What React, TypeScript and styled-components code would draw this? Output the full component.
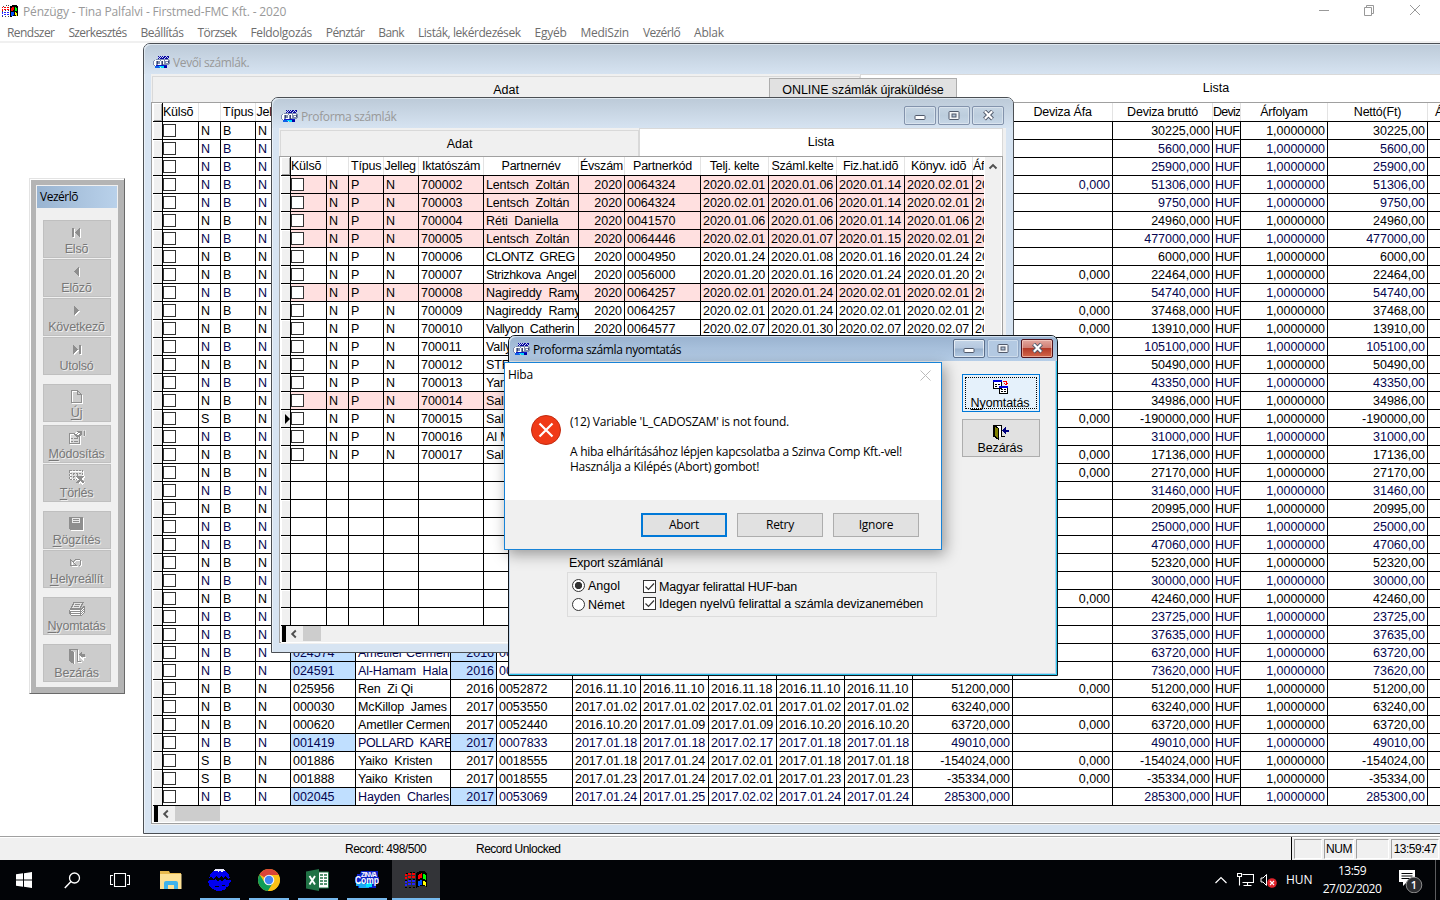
import React from "react";
import styled, { createGlobalStyle, css } from "styled-components";

const arial = `"Liberation Sans", Arial, sans-serif`;
const segoe = `"Open Sans", "Segoe UI", sans-serif`;

const Global = createGlobalStyle`
  * { box-sizing: border-box; }
  body { margin: 0; background: #fff; overflow: hidden; }
`;

const Screen = styled.div`
  width: 1440px;
  height: 900px;
  display: flex;
  flex-direction: column;
  overflow: hidden;
  background: #fff;
  font-family: ${arial};
  font-size: 12.5px;
  color: #000;
`;

/* ---------- application frame ---------- */

const AppTitle = styled.header`
  height: 23px;
  display: flex;
  align-items: center;
  padding-left: 2px;
  font: 12px ${segoe};
  letter-spacing: -0.15px;
  color: #999;
`;
const AppName = styled.span`
  margin-left: 5px;
  flex: 1;
`;
const AppControls = styled.div`
  width: 122px;
  display: flex;
  justify-content: space-between;
  padding: 0 19px 3px 0;
`;
const MenuBar = styled.nav`
  height: 20px;
  display: flex;
  align-items: center;
  gap: 13.95px;
  padding-left: 7px;
  font: 12px ${segoe};
  color: #6d6d6d;
  white-space: pre;
  border-bottom: 2px solid #f0f0f0;
`;
const MenuItem = styled.span<{ $ls: number }>`
  letter-spacing: ${(p) => p.$ls}px;
`;
const Workspace = styled.main`
  position: relative;
  height: 793px;
  overflow: hidden;
`;

/* ---------- MDI windows ---------- */

const Frame = styled.section<{ $x: number; $y: number; $w: number; $h: number }>`
  position: absolute;
  left: ${(p) => p.$x}px;
  top: ${(p) => p.$y}px;
  width: ${(p) => p.$w}px;
  height: ${(p) => p.$h}px;
  display: flex;
  flex-direction: column;
  border: 1px solid #4b4f54;
  border-radius: 7px 7px 0 0;
  background: #d7e4f2;
  box-shadow: inset 1px 1px 0 #eaf1f8;
  padding: 0 7px 8px;
`;
const Caption = styled.div`
  height: 30px;
  flex: none;
  display: flex;
  align-items: center;
  margin: 0 -7px;
  padding: 7px 9px 0 9px;
  border-radius: 6px 6px 0 0;
  background: linear-gradient(#bccad8, #d6e3f1);
  font: 12px ${segoe};
  letter-spacing: -0.38px;
  color: #999;
  box-shadow: inset 1px 1px 0 #dfe8f0;
`;
const CaptionText = styled.span`
  flex: 1;
  margin-left: 3px;
`;
const CaptionButtons = styled.div`
  display: flex;
  gap: 2px;
  padding-bottom: 2px;
`;
const CaptionButton = styled.span<{ $kind?: "active" | "dim" | "close" }>`
  width: 32px;
  height: 19px;
  display: flex;
  align-items: center;
  justify-content: center;
  border: 1px solid #8393ac;
  border-radius: 2px;
  box-shadow: inset 0 0 0 1px rgba(255, 255, 255, 0.35);
  background: linear-gradient(#c6d5e3, #bccddd 50%, #c6d6e6);
  ${(p) =>
    p.$kind === "active" &&
    css`
      border-color: #5a6d89;
      background: linear-gradient(#c3d4e7 0%, #b4c7de 48%, #98b0cc 52%, #b3cae3);
      box-shadow: inset 0 0 0 1px rgba(255, 255, 255, 0.6);
    `}
  ${(p) =>
    p.$kind === "dim" &&
    css`
      border-color: #8fa5c3;
      background: #b3c9e2;
    `}
  ${(p) =>
    p.$kind === "close" &&
    css`
      border-color: #50121b;
      background: linear-gradient(#e3a79e 0%, #d07f74 45%, #b43a28 50%, #d2674b);
      box-shadow: inset 0 0 0 1px rgba(255, 220, 210, 0.55);
    `}
`;
const Content = styled.div<{ $pr?: number }>`
  flex: 1;
  min-height: 0;
  display: flex;
  flex-direction: column;
  background: #f0f0f0;
  padding-right: ${(p) => p.$pr ?? 0}px;
`;
const Tabs = styled.div`
  height: 28px;
  flex: none;
  display: flex;
`;
const Tab = styled.div<{ $w: number; $on?: boolean }>`
  width: ${(p) => p.$w}px;
  flex: none;
  display: flex;
  align-items: center;
  justify-content: center;
  background: ${(p) => (p.$on ? "#fff" : "#f0f0f0")};
  margin: ${(p) => (p.$on ? "0" : "2px 0 0 1px")};
  padding-bottom: ${(p) => (p.$on ? 1 : 0)}px;
  border: 1px solid #d9d9d9;
  border-bottom: 0;
`;
const OnlineButton = styled.div`
  position: absolute;
  left: 625px;
  top: 34px;
  width: 188px;
  height: 24px;
  display: flex;
  align-items: center;
  justify-content: center;
  background: #e1e1e1;
  border: 1px solid #adadad;
  letter-spacing: -0.07px;
`;
const Sheet = styled.div`
  position: relative;
  flex: 1;
  min-height: 0;
  display: flex;
  flex-direction: column;
  border: 1px solid #a0a0a0;
  background: #fff;
  margin-bottom: 1px;
  padding-left: 1px;
`;

/* ---------- data grid ---------- */

const GridBox = styled.div`
  overflow: hidden;
  flex: none;
`;
const GridRow = styled.div<{ $cols: string; $head?: boolean; $navy?: boolean; $bg?: string }>`
  display: grid;
  grid-template-columns: ${(p) => p.$cols};
  width: max-content;
  height: ${(p) => (p.$head ? 19 : 18)}px;
  border-bottom: 1px solid #000;
  color: ${(p) => (p.$navy ? "#04044f" : "#000")};
  background: ${(p) => p.$bg ?? "#fff"};
`;
const Cell = styled.div<{ $align?: string; $bg?: string; $ls?: number }>`
  display: flex;
  align-items: center;
  justify-content: ${(p) => p.$align ?? "flex-start"};
  padding: 1px 2px 0;
  overflow: hidden;
  white-space: pre;
  letter-spacing: ${(p) => p.$ls ?? -0.03}px;
  border-right: 1px solid #000;
  background: ${(p) => p.$bg ?? "transparent"};
`;
const HeadCell = styled.div<{ $left?: number; $ls?: number }>`
  display: flex;
  align-items: center;
  justify-content: ${(p) => (p.$left === undefined ? "center" : "flex-start")};
  padding: 0 0 1px ${(p) => p.$left ?? 0}px;
  overflow: hidden;
  white-space: pre;
  letter-spacing: ${(p) => p.$ls ?? -0.22}px;
  border-right: 1px solid #e3e3e3;
`;
const Handle = styled.div<{ $head?: boolean }>`
  background: #f0f0f0;
  border-right: 1px solid #000;
  display: flex;
  align-items: center;
  justify-content: flex-end;
  box-shadow: inset 1px 1px 0 #fff ${(p) => (p.$head ? ", inset -1px -1px 0 #a0a0a0" : "")};
`;
const Box = styled.span`
  width: 13px;
  height: 13px;
  margin: 0 0 1px -2px;
  border: 1px solid #333;
  background: #fff;
  flex: none;
`;
const HScroll = styled.div`
  height: 17px;
  display: flex;
  align-items: center;
  background: #f0f0f0;
  padding: 0 0 1px 1px;
  border-bottom: 1px solid #fff;
`;
const SplitBar = styled.span`
  width: 4px;
  height: 16px;
  background: #000;
  margin-right: 4px;
`;
const Thumb = styled.span<{ $w: number }>`
  width: ${(p) => p.$w}px;
  height: 15px;
  margin-left: 6px;
  background: #cdcdcd;
`;
const SheetRow = styled.div`
  display: flex;
  height: 469px;
`;
const InnerGridClip = styled.div`
  width: 703px;
  height: 469px;
  overflow: hidden;
`;
const VScroll = styled.div`
  width: 17px;
  height: 468px;
  background: #f0f0f0;
  border-left: 1px solid #fff;
  display: flex;
  justify-content: center;
  padding-top: 6px;
`;

/* ---------- control panel ---------- */

const Panel = styled.aside`
  position: absolute;
  left: 29px;
  top: 135px;
  width: 96px;
  height: 516px;
  border: 1px solid;
  border-color: #e3e3e3 #696969 #696969 #e3e3e3;
  background: #b4b4b4;
  padding: 6px;
  box-shadow: inset 1px 1px 0 #fff;
`;
const PanelBody = styled.div`
  height: 100%;
  background: #f0f0f0;
  padding: 1px;
`;
const PanelTitle = styled.div`
  height: 22px;
  background: linear-gradient(90deg, #99b4d1, #b9d1ea);
  padding: 3px 0 0 3px;
  font: 12px/16px ${segoe};
  letter-spacing: -0.5px;
`;
const PanelButtons = styled.div`
  display: flex;
  flex-direction: column;
  gap: 1px;
  padding: 12px 6px 0;
`;
const PanelButton = styled.div<{ $mt?: number }>`
  height: 38px;
  margin-top: ${(p) => p.$mt ?? 0}px;
  display: flex;
  flex-direction: column;
  align-items: center;
  justify-content: flex-end;
  background: #ccc;
  border: 1px solid #bfbfbf;
  color: #787878;
  text-shadow: 1px 1px 0 #eee;
  line-height: 14px;
  padding: 0 1px 1px 0;
  letter-spacing: -0.2px;
  gap: 1px;
`;
const Key = styled.span`
  text-decoration: underline;
  text-underline-offset: 2px;
`;

/* ---------- print window ---------- */

const PrintWindow = styled.section`
  position: absolute;
  left: 508px;
  top: 292px;
  width: 550px;
  height: 341px;
  border: 1px solid #10151b;
  border-radius: 7px 7px 0 0;
  background: #f0f0f0;
  box-shadow: inset -1px -1px 0 #29c2e8, inset 1px 0 0 #c5d9ee, inset -2px -2px 0 #b9d1ea;
`;
const PrintCaption = styled.div`
  height: 25px;
  display: flex;
  align-items: center;
  padding: 2px 4px 0 4px;
  border-radius: 6px 6px 0 0;
  background: linear-gradient(#99b2cf, #b6cee8);
  box-shadow: inset 1px 1px 0 #d3e0ee;
  font: 12px ${segoe};
  letter-spacing: -0.38px;
`;
const PrintBody = styled.div`
  display: flex;
  padding-left: 58px;
`;
const ExportArea = styled.div`
  width: 370px;
  padding-top: 193px;
`;
const ExportTitle = styled.div`
  height: 18px;
  line-height: 19px;
  padding-left: 2px;
  letter-spacing: -0.13px;
`;
const ExportBox = styled.div`
  height: 45px;
  display: flex;
  border: 1px solid #dcdcdc;
  padding: 4px 0 0 4px;
`;
const OptionColumn = styled.div<{ $w?: number; $gap: number; $pt?: number }>`
  width: ${(p) => (p.$w ? p.$w + "px" : "auto")};
  display: flex;
  flex-direction: column;
  gap: ${(p) => p.$gap}px;
  padding-top: ${(p) => p.$pt ?? 0}px;
`;
const Option = styled.label`
  height: 15px;
  display: flex;
  align-items: center;
  gap: 3px;
  white-space: nowrap;
`;
const OptionText = styled.span<{ $ls?: number }>`
  padding-top: 2px;
  letter-spacing: ${(p) => p.$ls ?? 0}px;
`;
const Radio = styled.span<{ $on?: boolean }>`
  width: 13px;
  height: 13px;
  margin-top: 1px;
  border: 1px solid #333;
  border-radius: 50%;
  background: ${(p) => (p.$on ? "radial-gradient(circle, #333 0 3.3px, #fff 4px)" : "#fff")};
`;
const Check = styled.span`
  width: 13px;
  height: 13px;
  margin-top: 1px;
  border: 1px solid #333;
  background: #fff;
  display: flex;
`;
const ActionColumn = styled.div`
  margin-left: 25px;
  padding-top: 13px;
  display: flex;
  flex-direction: column;
  gap: 7px;
`;
const Action = styled.div<{ $focus?: boolean }>`
  width: 78px;
  height: 38px;
  display: flex;
  flex-direction: column;
  align-items: center;
  justify-content: flex-end;
  gap: 1px;
  padding: 0 2px 1px 0;
  line-height: 14px;
  letter-spacing: -0.1px;
  border: 1px solid ${(p) => (p.$focus ? "#0078d7" : "#adadad")};
  background: ${(p) => (p.$focus ? "#e5f1fb" : "#e1e1e1")};
  ${(p) =>
    p.$focus &&
    css`
      outline: 1px dotted #000;
      outline-offset: -4px;
    `}
`;
const ActionArt = styled.svg`
  margin-left: 2px;
`;

/* ---------- error dialog ---------- */

const Dialog = styled.div`
  position: absolute;
  left: 504px;
  top: 319px;
  width: 438px;
  height: 188px;
  display: flex;
  flex-direction: column;
  border: 1px solid #1883d7;
  background: #fff;
  box-shadow: 3px 4px 14px rgba(0, 0, 0, 0.38);
  font: 12px ${segoe};
  letter-spacing: -0.28px;
`;
const DialogTitle = styled.div`
  height: 24px;
  display: flex;
  align-items: center;
  justify-content: space-between;
  padding: 0 10px 0 3px;
`;
const DialogName = styled.span`
  padding-bottom: 2px;
`;
const DialogBody = styled.div`
  flex: 1;
  display: flex;
  padding: 27px 0 0 26px;
  gap: 9px;
`;
const ErrorIcon = styled.svg`
  margin-top: 1px;
`;
const Message = styled.div`
  line-height: 15px;
  white-space: pre;
`;
const MessageLine = styled.div<{ $ls: number }>`
  height: 15px;
  letter-spacing: ${(p) => p.$ls}px;
`;
const DialogFooter = styled.div`
  height: 49px;
  display: flex;
  justify-content: flex-end;
  gap: 10px;
  padding: 13px 22px 0 0;
  background: #f0f0f0;
`;
const DialogButton = styled.div<{ $default?: boolean }>`
  width: 86px;
  height: 24px;
  display: flex;
  align-items: center;
  justify-content: center;
  padding-bottom: 2px;
  background: #e1e1e1;
  border: ${(p) => (p.$default ? "2px solid #0078d7" : "1px solid #adadad")};
`;

/* ---------- status bar and taskbar ---------- */

const StatusBar = styled.footer`
  height: 24px;
  display: flex;
  background: #f0f0f0;
  border-top: 1px solid #a0a0a0;
  box-shadow: inset 0 1px 0 #fff;
  line-height: 25px;
  font-size: 12px;
  padding-right: 1px;
`;
const StatusText = styled.span<{ $ml: number; $w: number }>`
  margin-left: ${(p) => p.$ml}px;
  width: ${(p) => p.$w}px;
  white-space: nowrap;
  letter-spacing: -0.5px;
`;
const StatusFill = styled.span`
  flex: 1;
  border-right: 1px solid #000;
`;
const StatusCell = styled.span<{ $w: number }>`
  width: ${(p) => p.$w}px;
  height: 20px;
  margin: 2px 0 0 2px;
  border: 1px solid;
  border-color: #a0a0a0 #fff #fff #a0a0a0;
  line-height: 18px;
  text-align: center;
  white-space: nowrap;
  letter-spacing: -0.5px;
`;
const Taskbar = styled.footer`
  height: 40px;
  display: flex;
  background: #020407;
  color: #fff;
  font: 12px ${segoe};
`;
const TaskGroup = styled.div`
  display: flex;
  margin-left: -2px;
`;
const Task = styled.div<{ $w?: number; $state?: "run" | "active" }>`
  width: ${(p) => p.$w ?? 49}px;
  display: flex;
  align-items: center;
  justify-content: center;
  ${(p) =>
    p.$state === "run" &&
    css`
      background: linear-gradient(#76b9ed, #76b9ed) center bottom / 40px 2px no-repeat;
    `}
  ${(p) =>
    p.$state === "active" &&
    css`
      margin-left: 1px;
      background: #333438;
      border-bottom: 2px solid #76b9ed;
      padding-top: 2px;
    `}
`;
const Tray = styled.div`
  flex: 1;
  display: flex;
  align-items: center;
  justify-content: flex-end;
`;
const TrayIcon = styled.svg<{ $ml: number; $mr?: number }>`
  margin: 0 ${(p) => p.$mr ?? 0}px 0 ${(p) => p.$ml}px;
`;
const Lang = styled.span`
  margin-left: 8px;
  padding-bottom: 1px;
  width: 26px;
  letter-spacing: -0.1px;
`;
const Clock = styled.div`
  width: 80px;
  text-align: center;
  line-height: 18px;
  letter-spacing: -0.5px;
`;
const ShowDesktop = styled.span`
  height: 40px;
  width: 5px;
  border-left: 1px solid #5c5d5f;
`;

/* ---------- icons ---------- */

const FlagIcon = ({ w, h }: { w: number; h: number }) => (
  <svg width={w} height={h} viewBox="0 0 22 18" shapeRendering="crispEdges">
    <path d="M11 2 15 0h4l3 2v14l-3-1h-4l-4 2z" fill="#000" />
    <path d="M13 4l4-2v5l-4 1z" fill="#f00" />
    <path d="M18 3l3 1v5l-3-1z" fill="#0f0" />
    <path d="M13 10l4-1v5l-4 1z" fill="#0050ff" />
    <path d="M18 10l3 1v4l-3-1z" fill="#ff0" />
    <path d="M0 4h2M3 3h3M7 3h3M0 7h2M3 6h3M7 6h3" stroke="#f00" strokeWidth="1.6" />
    <path d="M0 11h2M3 10h3M7 10h3M0 14h2M3 13h3M7 13h3" stroke="#22f" strokeWidth="1.6" />
    <path d="M0 9h2M4 8h2M8 8h2M0 16h2M4 16h2M8 16h2M1 2h2M5 1h2M8 1h2" stroke="#000" />
  </svg>
);

/* small company badge for the window captions */
const CompIcon = () => (
  <svg width="17" height="13" viewBox="0 0 17 13" shapeRendering="crispEdges">
    <path d="M5 0h11v3H5z" fill="#0808a0" />
    <path d="M6 .5h1M8 .5h1M10 .5h1M13 .5h1M5 1.500h1M7 1.500h1M9 1.500h1M12 1.500h1M14 1.500h1M6 2.500h1M11 2.500h1M15 2.500h1" stroke="#c8d0f4" />
    <path d="M3 3h13v1h1v4h-1v1H3v1H1V9H0V5h1V4h2z" fill="#7f8db0" />
    <path d="M2 4h3v1H3v4h2v1H2V9H1V5h1z" fill="#fff" />
    <path d="M5 4h2v1H5zM8 4h3v1H8zM12 4h3v1h-3zM7 5h1v4H7zM10 5h1v3h-1zM13 6h2v1h-2zM5 8h2v1H5z" fill="#fff" />
    <path d="M4 5h1v3H4zM9 5h1v4H9zM15 5h1v2h-1z" fill="#3a4470" />
    <path d="M3 9h11v1H3z" fill="#0a14c8" />
    <path d="M2 10h5v2H2z" fill="#1060e8" />
    <path d="M8 11h3v1H8zM6 10h5v1H6z" fill="#00d8ff" />
    <path d="M11 10h3v2h-3z" fill="#0000a8" />
  </svg>
);

const CompTaskIcon = () => (
  <svg width="24" height="18" viewBox="0 0 24 18">
    <path d="M6 0h17v6h1v6h-3v5H3v-3H1v-2H0V6h2V3h3z" fill="#0a1ec8" />
    <path d="M1 11h8v2h5v4H4v-2H1z" fill="#19a8f4" />
    <path d="M11 12h6v4h-6z" fill="#00e0ff" />
    <text x="6" y="5.500" fontSize="6.500" fontWeight="bold" fill="#fff" fontFamily="Liberation Sans" textLength="16">ZINVA</text>
    <text x="0" y="12.500" fontSize="10" fontWeight="bold" fill="#fff" fontFamily="Liberation Sans" textLength="24" lengthAdjust="spacingAndGlyphs">Comp</text>
  </svg>
);

const MinGlyph = () => (
  <svg width="12" height="12" viewBox="0 0 12 12">
    <rect x="1" y="5.500" width="10" height="4" rx=".8" fill="#fff" stroke="#50596b" />
  </svg>
);
const MaxGlyph = () => (
  <svg width="12" height="10" viewBox="0 0 12 10">
    <rect x="1" y=".5" width="10" height="8" rx=".8" fill="#f4f6f9" stroke="#50596b" />
    <rect x="4" y="3" width="4" height="3" fill="#aebfd3" stroke="#50596b" />
  </svg>
);
const CloseGlyph = () => (
  <svg width="13" height="11" viewBox="0 0 13 11">
    <path d="M2.500 1l8 8M10.500 1l-8 8" stroke="#50596b" strokeWidth="4" />
    <path d="M2.800 1.300l7.400 7.400M10.200 1.300L2.800 8.700" stroke="#fff" strokeWidth="2.200" />
  </svg>
);

const WindowButtons = ({ active }: { active?: boolean }) => (
  <CaptionButtons>
    <CaptionButton $kind={active ? "active" : undefined}><MinGlyph /></CaptionButton>
    <CaptionButton $kind={active ? "dim" : undefined}><MaxGlyph /></CaptionButton>
    <CaptionButton $kind={active ? "close" : undefined}><CloseGlyph /></CaptionButton>
  </CaptionButtons>
);

const ScrollLeft = () => (
  <svg width="7" height="10" viewBox="0 0 7 10">
    <path d="M5.800 1.500L2.200 5l3.600 3.500" fill="none" stroke="#505050" strokeWidth="1.900" />
  </svg>
);

const panelArt: Record<string, React.ReactNode> = {
  first: (<><path d="M4 4h2v9H4zM12 4v9L7 8.500z" fill="#fff" transform="translate(1 1)" /><path d="M4 4h2v9H4zM12 4v9L7 8.500z" fill="#8e8e8e" /></>),
  prev: (<><path d="M11 4v9L6 8.500z" fill="#fff" transform="translate(1 1)" /><path d="M11 4v9L6 8.500z" fill="#8e8e8e" /></>),
  next: (<><path d="M6 4v9l5-4.500z" fill="#fff" transform="translate(1 1)" /><path d="M6 4v9l5-4.500z" fill="#8e8e8e" /></>),
  last: (<><path d="M11 4h2v9h-2zM5 4v9l5-4.500z" fill="#fff" transform="translate(1 1)" /><path d="M11 4h2v9h-2zM5 4v9l5-4.500z" fill="#8e8e8e" /></>),
  doc: (<><path d="M4.500 3.500h6l4 4v8h-10z" fill="none" stroke="#fff" /><path d="M3.500 2.500h6l4 4v8h-10zM9.500 2.500v4h4" fill="none" stroke="#8e8e8e" /></>),
  edit: (
    <>
      <path d="M2.500 5.500h10v10h-10z" fill="#d8d8d8" stroke="#fff" />
      <path d="M1.500 4.500h10v10h-10zM3 9.500h2M6 9.500h4M3 12.500h2M6 12.500h4" fill="none" stroke="#8e8e8e" />
      <path d="M6 5l3-3h5v4l-3 1-2 2z" fill="#8e8e8e" />
      <path d="M7 5l3-2M9 6l3-2" stroke="#fff" />
      <path d="M15 1h2v6h-2z" fill="#8e8e8e" stroke="#fff" strokeWidth=".5" />
    </>
  ),
  del: (
    <>
      <path d="M2.500 3.500h13v8h-13z" fill="#ddd" stroke="#fff" />
      <path d="M1.500 2.500h13v9h-13zM2 5.500h12M2 8.500h12M5.500 5v6M9.500 5v6" fill="none" stroke="#8e8e8e" strokeDasharray="2 1" />
      <path d="M9 9l7 7M16 8l-6 7" stroke="#fff" strokeWidth="3" />
      <path d="M9 8l7 7M15 8l-6 7" stroke="#8e8e8e" strokeWidth="2" />
    </>
  ),
  save: (<><path d="M2 3h14v13H3z" fill="#fff" /><path d="M1 2h14v13H2l-1-1z" fill="#8e8e8e" /><path d="M4 3h8v5H4z" fill="#e8e8e8" /><path d="M5 4.500h6M5 6.500h6" stroke="#8e8e8e" /></>),
  undo: (<><path d="M4 7v5h5zM6 9c3-4 8-3 8 0 0 2-1 3-2 4" fill="none" stroke="#fff" /><path d="M2 5v6h6zM5 8c3-4 8-3 8 0 0 2-1 3-2 4" fill="none" stroke="#8e8e8e" /></>),
  print: (
    <>
      <path d="M6 1.500h9l-3 6H3z" fill="#e4e4e4" stroke="#8e8e8e" />
      <path d="M7 3.500h5M6 5.500h5" stroke="#8e8e8e" />
      <path d="M1 9l3-2h9l3-2 1 1v5l-4 4H3l-2-2z" fill="#8e8e8e" />
      <path d="M2 9.500h10M3 11.500h9M3 13.500h9M13 10l3-3M13 12l3-3M13 14l3-3" stroke="#fff" />
    </>
  ),
  exit: (
    <>
      <path d="M10.500 2v12.500H14M6.500 4v12" fill="none" stroke="#fff" />
      <path d="M1 1l5 3v12l-5-3z" fill="#8e8e8e" />
      <path d="M1 1.500h8.500v12H13" fill="none" stroke="#8e8e8e" />
      <path d="M11 6.500l3-3v2h3v3h-3v2z" fill="#8e8e8e" />
      <path d="M12 8.500l3 3v-2h3" fill="none" stroke="#fff" />
    </>
  ),
};

const PanelIcon = ({ name }: { name: string }) => (
  <svg width="18" height="17" viewBox="0 0 18 17" shapeRendering="crispEdges">{panelArt[name]}</svg>
);

const TransferIcon = () => (
  <ActionArt width="16" height="16" viewBox="0 0 16 16" shapeRendering="crispEdges">
    <path d="M.5 1.500h8v8h-8zM6.500 7.500h8v7h-8z" fill="#fff" stroke="#000" />
    <path d="M0 1h9v2H0zM6 7h9v2H6z" fill="#0000e0" />
    <path d="M2 5.500h2M5 5.500h2M2 7.500h2M8 10.500h2M11 10.500h2M8 12.500h2M11 12.500h2" stroke="#000" />
    <path d="M10 2.500h3V6M11 4l2 2 2-2" stroke="#f00" fill="none" />
  </ActionArt>
);
const DoorIcon = () => (
  <ActionArt width="16" height="16" viewBox="0 0 16 16" shapeRendering="crispEdges">
    <path d="M.5 12.500V1.500h8v11H12" fill="#fff" stroke="#000" />
    <path d="M1 1l4 3v11l-4-3z" fill="#808000" stroke="#000" />
    <path d="M9 6.500l4-4v3h3v2h-3v3z" fill="#000080" />
  </ActionArt>
);

/* ---------- data ---------- */

type OuterRow = { gross: string; vat: boolean; navy: boolean; kind: string; mid: string[] };

const navyRows = new Set([2, 3, 4, 5, 7, 10, 13, 15, 18, 21, 23, 24, 26, 28, 29, 30, 31, 35, 38]);
const vatRows = new Set([4, 9, 11, 12, 17, 19, 20, 27, 32, 34, 36, 37]);
const gross = [
  30225, 5600, 25900, 51306, 9750, 24960, 477000, 6000, 22464, 54740, 37468, 13910, 105100, 50490,
  43350, 34986, -190000, 31000, 17136, 27170, 31460, 20995, 25000, 47060, 52320, 30000, 42460, 23725,
  37635, 63720, 73620, 51200, 63240, 63720, 49010, -154024, -35334, 285300,
];
const details: Record<number, string[]> = {
  30: ["024574", "Ametller Cermen", "2016", "00"],
  31: ["024591", "Al-Hamam  Hala", "2016", "00"],
  32: ["025956", "Ren  Zi Qi", "2016", "0052872", "2016.11.10", "2016.11.10", "2016.11.18", "2016.11.10", "2016.11.10"],
  33: ["000030", "McKillop  James", "2017", "0053550", "2017.01.02", "2017.01.02", "2017.02.01", "2017.01.02", "2017.01.02"],
  34: ["000620", "Ametller Cermen", "2017", "0052440", "2016.10.20", "2017.01.09", "2017.01.09", "2016.10.20", "2016.10.20"],
  35: ["001419", "POLLARD  KARE", "2017", "0007833", "2017.01.18", "2017.01.18", "2017.02.17", "2017.01.18", "2017.01.18"],
  36: ["001886", "Yaiko  Kristen", "2017", "0018555", "2017.01.18", "2017.01.24", "2017.02.01", "2017.01.18", "2017.01.18"],
  37: ["001888", "Yaiko  Kristen", "2017", "0018555", "2017.01.23", "2017.01.24", "2017.02.01", "2017.01.23", "2017.01.23"],
  38: ["002045", "Hayden  Charles", "2017", "0053069", "2017.01.24", "2017.01.25", "2017.02.02", "2017.01.24", "2017.01.24"],
};
const outerRows: OuterRow[] = gross.map((g, i) => ({
  gross: String(g),
  vat: vatRows.has(i + 1),
  navy: navyRows.has(i + 1),
  kind: [17, 36, 37].includes(i + 1) ? "S" : "N",
  mid: details[i + 1] ?? [],
}));

/* capitals and long names are set tighter so that they fit their column */
const nameSpacing = (name = "") => (/[A-Z]{4}/.test(name) ? -0.42 : name.length > 15 ? -0.36 : -0.14);

const outerCols = "10px 36px 22px 35px 35px 65px 95px 46px 76px 68px 68px 68px 68px 68px 100px 100px 100px 28px 87px 100px 40px";
const innerCols = "10px 36px 22px 35px 35px 65px 95px 46px 76px 68px 68px 68px 68px 40px";

const proformas: string[][] = [
  ["700002", "Lentsch  Zoltán", "0064324", "2020.02.01", "2020.01.06", "2020.01.14", "2020.02.01", "p"],
  ["700003", "Lentsch  Zoltán", "0064324", "2020.02.01", "2020.01.06", "2020.01.14", "2020.02.01", "p"],
  ["700004", "Réti  Daniella", "0041570", "2020.01.06", "2020.01.06", "2020.01.14", "2020.01.06", "p"],
  ["700005", "Lentsch  Zoltán", "0064446", "2020.02.01", "2020.01.07", "2020.01.15", "2020.02.01", "p"],
  ["700006", "CLONTZ  GREG", "0004950", "2020.01.24", "2020.01.08", "2020.01.16", "2020.01.24", ""],
  ["700007", "Strizhkova  Angel", "0056000", "2020.01.20", "2020.01.16", "2020.01.24", "2020.01.20", ""],
  ["700008", "Nagireddy  Ramy", "0064257", "2020.02.01", "2020.01.24", "2020.02.01", "2020.02.01", "p"],
  ["700009", "Nagireddy  Ramy", "0064257", "2020.02.01", "2020.01.24", "2020.02.01", "2020.02.01", ""],
  ["700010", "Vallyon  Catherin", "0064577", "2020.02.07", "2020.01.30", "2020.02.07", "2020.02.07", ""],
  ["700011", "Vally", "", "", "", "", "", ""],
  ["700012", "STR", "", "", "", "", "", ""],
  ["700013", "Yar", "", "", "", "", "", ""],
  ["700014", "Sal", "", "", "", "", "", "p"],
  ["700015", "Sal", "", "", "", "", "", ""],
  ["700016", "Al M", "", "", "", "", "", ""],
  ["700017", "Sal", "", "", "", "", "", ""],
];

const outerHead = ["Külsõ", "", "Típus", "Jelleg", "", "", "", "", "", "", "", "", "", "", "Deviza Áfa", "Deviza bruttó", "Deviz", "Árfolyam", "Nettó(Ft)", "Á"];
const innerHead = ["Külsõ", "", "Típus", "Jelleg", "Iktatószám", "Partnernév", "Évszám", "Partnerkód", "Telj. kelte", "Száml.kelte", "Fiz.hat.idõ", "Könyv. idõ", "Áf"];

const headIndent: Record<string, number> = { "Külsõ": 0, Jelleg: 0.5, Deviz: 0, "Á": 7, "Áf": 0, "Típus": 2 };

const Head = ({ cols, names }: { cols: string; names: string[] }) => (
  <GridRow $cols={cols} $head>
    <Handle $head />
    {names.map((n, i) => (
      <HeadCell key={i} $left={headIndent[n]} $ls={n === "Deviz" ? -0.75 : undefined}>{n}</HeadCell>
    ))}
  </GridRow>
);

const OuterGrid = () => (
  <GridBox>
    <Head cols={outerCols} names={outerHead} />
    {outerRows.map((r, i) => {
      const m = r.mid;
      const hl = m.length && r.navy ? "#c0dfff" : undefined;
      return (
        <GridRow key={i} $cols={outerCols} $navy={r.navy}>
          <Handle />
          <Cell><Box /></Cell>
          <Cell>{r.kind}</Cell>
          <Cell>B</Cell>
          <Cell>N</Cell>
          <Cell $bg={hl}>{m[0]}</Cell>
          <Cell $ls={nameSpacing(m[1])}>{m[1]}</Cell>
          <Cell $bg={hl} $align="flex-end">{m[2]}</Cell>
          <Cell>{m[3]}</Cell>
          {[4, 5, 6, 7, 8].map((k) => <Cell key={k}>{m[k]}</Cell>)}
          <Cell $align="flex-end">{m.length > 4 ? `${r.gross},000` : ""}</Cell>
          <Cell $align="flex-end">{r.vat ? "0,000" : ""}</Cell>
          <Cell $align="flex-end">{r.gross},000</Cell>
          <Cell $ls={-0.4}>HUF</Cell>
          <Cell $align="flex-end">1,0000000</Cell>
          <Cell $align="flex-end">{r.gross},00</Cell>
          <Cell />
        </GridRow>
      );
    })}
  </GridBox>
);

const InnerGrid = () => (
  <GridBox>
    <Head cols={innerCols} names={innerHead} />
    {Array.from({ length: 25 }, (_, i) => {
      const r = proformas[i];
      return (
        <GridRow key={i} $cols={innerCols} $bg={r && r[7] ? "#ffe0e0" : undefined}>
          <Handle>
            {i === 13 && (
              <svg width="5" height="10" viewBox="0 0 5 10"><path d="M0 0l5 5-5 5z" fill="#000" /></svg>
            )}
          </Handle>
          <Cell>{r && <Box />}</Cell>
          <Cell>{r && "N"}</Cell>
          <Cell>{r && "P"}</Cell>
          <Cell>{r && "N"}</Cell>
          <Cell>{r?.[0]}</Cell>
          <Cell $ls={nameSpacing(r?.[1])}>{r?.[1]}</Cell>
          <Cell $align="flex-end">{r?.[2] && "2020"}</Cell>
          <Cell>{r?.[2]}</Cell>
          {[3, 4, 5, 6].map((k) => <Cell key={k}>{r?.[k]}</Cell>)}
          <Cell>{r?.[3] && "20"}</Cell>
        </GridRow>
      );
    })}
  </GridBox>
);

const menu: [string, number][] = [
  ["Rendszer", -0.55], ["Szerkesztés", -0.62], ["Beállítás", -0.42], ["Törzsek", -0.6], ["Feldolgozás", -0.35],
  ["Pénztár", -0.6], ["Bank", -0.6], ["Listák, lekérdezések", -0.44], ["Egyéb", -0.25], ["MediSzin", -0.25],
  ["Vezérlő", -0.6], ["Ablak", -0.25],
];

const panelItems: { icon: string; key?: string; text: string; mt?: number }[] = [
  { icon: "first", text: "Elsõ" },
  { icon: "prev", text: "Elõzõ" },
  { icon: "next", text: "Következõ" },
  { icon: "last", text: "Utolsó" },
  { icon: "doc", key: "Ú", text: "j", mt: 8 },
  { icon: "edit", key: "M", text: "ódosítás", mt: 2 },
  { icon: "del", key: "T", text: "örlés" },
  { icon: "save", key: "R", text: "ögzítés", mt: 8 },
  { icon: "undo", key: "H", text: "elyreállít" },
  { icon: "print", key: "N", text: "yomtatás", mt: 8 },
  { icon: "exit", text: "Bezárás", mt: 8 },
];

const exportOptions: [string, number][] = [
  ["Magyar felirattal HUF-ban", -0.2],
  ["Idegen nyelvû felirattal a számla devizanemében", -0.13],
];

const messageLines: [string, number][] = [
  ["(12) Variable 'L_CADOSZAM' is not found.", -0.22],
  ["", 0],
  ["A hiba elhárításához lépjen kapcsolatba a Szinva Comp Kft.-vel!", -0.29],
  ["Használja a Kilépés (Abort) gombot!", -0.25],
];

export default function App() {
  return (
    <Screen>
      <Global />
      <AppTitle>
        <FlagIcon w={16} h={15} />
        <AppName>Pénzügy - Tina Palfalvi - Firstmed-FMC Kft. - 2020</AppName>
        <AppControls>
          <svg width="12" height="12" viewBox="0 0 12 12"><path d="M1 6.500h10" stroke="#999" /></svg>
          <svg width="12" height="12" viewBox="0 0 12 12"><path d="M.5 3.500h7v8h-7zM2.500 3.500v-2h7v8h-2" fill="none" stroke="#999" /></svg>
          <svg width="12" height="12" viewBox="0 0 12 12"><path d="M1 1l10 10M11 1L1 11" stroke="#999" /></svg>
        </AppControls>
      </AppTitle>
      <MenuBar>
        {menu.map(([m, ls]) => <MenuItem key={m} $ls={ls}>{m}</MenuItem>)}
      </MenuBar>

      <Workspace>
        <Panel>
          <PanelBody>
            <PanelTitle>Vezérlõ</PanelTitle>
            <PanelButtons>
              {panelItems.map((p) => (
                <PanelButton key={p.icon} $mt={p.mt}>
                  <PanelIcon name={p.icon} />
                  <span>{p.key && <Key>{p.key}</Key>}{p.text}</span>
                </PanelButton>
              ))}
            </PanelButtons>
          </PanelBody>
        </Panel>

        <Frame $x={143} $y={0} $w={1440} $h={791}>
          <Caption>
            <CompIcon />
            <CaptionText>Vevői számlák.</CaptionText>
          </Caption>
          <Content>
            <Tabs>
              <Tab $w={708}>Adat</Tab>
              <Tab $w={712} $on>Lista</Tab>
            </Tabs>
            <Sheet>
              <OuterGrid />
              <HScroll><SplitBar /><ScrollLeft /><Thumb $w={45} /></HScroll>
            </Sheet>
          </Content>
          <OnlineButton>ONLINE számlák újraküldése</OnlineButton>
        </Frame>

        <Frame $x={271} $y={54} $w={743} $h={556}>
          <Caption>
            <CompIcon />
            <CaptionText>Proforma számlák</CaptionText>
            <WindowButtons />
          </Caption>
          <Content $pr={3}>
            <Tabs>
              <Tab $w={359}>Adat</Tab>
              <Tab $w={364} $on>Lista</Tab>
            </Tabs>
            <Sheet>
              <SheetRow>
                <InnerGridClip><InnerGrid /></InnerGridClip>
                <VScroll>
                  <svg width="10" height="7" viewBox="0 0 10 7"><path d="M1.500 5.500L5 2l3.500 3.500" fill="none" stroke="#505050" strokeWidth="1.900" /></svg>
                </VScroll>
              </SheetRow>
              <HScroll><SplitBar /><ScrollLeft /><Thumb $w={18} /></HScroll>
            </Sheet>
          </Content>
        </Frame>

        <PrintWindow>
          <PrintCaption>
            <CompIcon />
            <CaptionText>Proforma számla nyomtatás</CaptionText>
            <WindowButtons active />
          </PrintCaption>
          <PrintBody>
            <ExportArea>
              <ExportTitle>Export számlánál</ExportTitle>
              <ExportBox>
                <OptionColumn $w={71} $gap={4}>
                  <Option><Radio $on /><OptionText>Angol</OptionText></Option>
                  <Option><Radio /><OptionText>Német</OptionText></Option>
                </OptionColumn>
                <OptionColumn $gap={2} $pt={1}>
                  {exportOptions.map(([t, ls]) => (
                    <Option key={t}>
                      <Check>
                        <svg width="11" height="11" viewBox="0 0 11 11"><path d="M1.500 5.500l3 3 5.500-6" fill="none" stroke="#333" strokeWidth="1.200" /></svg>
                      </Check>
                      <OptionText $ls={ls}>{t}</OptionText>
                    </Option>
                  ))}
                </OptionColumn>
              </ExportBox>
            </ExportArea>
            <ActionColumn>
              <Action $focus><TransferIcon /><span><Key>N</Key>yomtatás</span></Action>
              <Action><DoorIcon /><span>Bezárás</span></Action>
            </ActionColumn>
          </PrintBody>
        </PrintWindow>

        <Dialog>
          <DialogTitle>
            <DialogName>Hiba</DialogName>
            <svg width="11" height="11" viewBox="0 0 11 11"><path d="M.5.500l10 10M10.500.500l-10 10" stroke="#bbb" /></svg>
          </DialogTitle>
          <DialogBody>
            <ErrorIcon width="30" height="32" viewBox="0 0 30 32">
              <circle cx="15" cy="15" r="14.500" fill="#f03a17" stroke="#c22a10" />
              <path d="M8.500 8.500l13 13M21.500 8.500l-13 13" stroke="#fff" strokeWidth="2.200" />
            </ErrorIcon>
            <Message>
              {messageLines.map(([t, ls], i) => <MessageLine key={i} $ls={ls}>{t}</MessageLine>)}
            </Message>
          </DialogBody>
          <DialogFooter>
            <DialogButton $default>Abort</DialogButton>
            <DialogButton>Retry</DialogButton>
            <DialogButton>Ignore</DialogButton>
          </DialogFooter>
        </Dialog>
      </Workspace>

      <StatusBar>
        <StatusText $ml={345} $w={131}>Record: 498/500</StatusText>
        <StatusText $ml={0} $w={100}>Record Unlocked</StatusText>
        <StatusFill />
        <StatusCell $w={28} />
        <StatusCell $w={30}>NUM</StatusCell>
        <StatusCell $w={33} />
        <StatusCell $w={48}>13:59:47</StatusCell>
      </StatusBar>

      <Taskbar>
        <Task $w={48}>
          <svg width="16" height="16" viewBox="0 0 16 16"><path d="M0 2.300l7-1v6.200H0zM8 1.200L16 0v7.500H8zM0 8.500h7v6.200l-7-1zM8 8.500h8V16l-8-1.200z" fill="#fff" /></svg>
        </Task>
        <Task $w={48}>
          <svg width="17" height="17" viewBox="0 0 17 17"><circle cx="10.500" cy="6" r="5" fill="none" stroke="#fff" strokeWidth="1.300" /><path d="M7 9.500L.8 16" stroke="#fff" strokeWidth="1.500" /></svg>
        </Task>
        <Task $w={48}>
          <svg width="20" height="14" viewBox="0 0 20 14"><path d="M4.500.5h11v13h-11zM3 2.500H.5v9H3M17 2.500h2.500v9H17" fill="none" stroke="#fff" strokeWidth="1.100" /></svg>
        </Task>
        <Task $w={53}>
          <svg width="22" height="18" viewBox="0 0 22 18">
            <path d="M0 0h9l1 2h11v16H0z" fill="#e7b94e" />
            <path d="M0 3h21.500v15H0z" fill="#fce196" />
            <path d="M4 18v-6q0-2 2-2h10q2 0 2 2v6h-4v-4H8v4z" fill="#3eb3ec" />
          </svg>
        </Task>
        <TaskGroup>
          <Task $state="run">
            <svg width="24" height="24" viewBox="0 0 24 24" shapeRendering="crispEdges">
              <path d="M7 2h9l4 3 2 5-2 1-3-3-1 3-3-3-2 3-3-3-2 3-3-2-2 1 2-5z" fill="#0000f0" />
              <path d="M1 12h5l1-1 2 2 3-1 2 1 3-2 2 1h4v2l-2 1v3l-3 1v2l-3 1-2 1h-4l-2-1-3-1-1-2-2-1v-3l-2-1z" fill="#0000f0" />
              <path d="M8 1h7l3 2h-3l-1 1-2-1-2 1-1-1H5z" fill="#e8e8ff" />
              <path d="M7 18.500h4M14 17.500h3" stroke="#020407" />
            </svg>
          </Task>
          <Task $state="run">
            <svg width="22" height="22" viewBox="0 0 22 22">
              <circle cx="11" cy="11" r="11" fill="#fbc116" />
              <path d="M11 11L1.500 5.500A11 11 0 0 1 20.500 5.500L20.500 6H11z" fill="#db4437" />
              <path d="M1.500 5.500A11 11 0 0 0 10 22L15.300 13.500 11 11 6.700 13.500z" fill="#109d58" />
              <path d="M20.500 6A11 11 0 0 1 10 22l5.300-8.500L16 11 14 6z" fill="#fbc116" />
              <circle cx="11" cy="11" r="5.300" fill="#f4f4f4" /><circle cx="11" cy="11" r="4.200" fill="#4285f4" />
            </svg>
          </Task>
          <Task $state="run">
            <svg width="23" height="22" viewBox="0 0 23 22">
              <path d="M12 3h10.500v16H12z" fill="#fff" stroke="#207245" />
              <path d="M14 6h3M18 6h3M14 9h3M18 9h3M14 12h3M18 12h3M14 15h3M18 15h3" stroke="#207245" strokeWidth="1.600" />
              <path d="M0 2.500L13 0v22L0 19.500z" fill="#207245" />
              <path d="M3.500 7l5.500 8.500M9 7l-5.500 8.500" stroke="#fff" strokeWidth="1.900" />
            </svg>
          </Task>
          <Task $state="run"><CompTaskIcon /></Task>
          <Task $w={48} $state="active"><FlagIcon w={22} h={18} /></Task>
        </TaskGroup>
        <Tray>
          <svg width="14" height="8" viewBox="0 0 14 8"><path d="M1.500 7L7 1.500 12.500 7" fill="none" stroke="#fff" strokeWidth="1.200" /></svg>
          <TrayIcon $ml={9} width="17" height="14" viewBox="0 0 17 14"><path d="M5.500 1.500h11v8h-11M.5.500h4v3h-4zM2.500 3.500v9M10.500 9.500v3M6.500 12.500h8" fill="none" stroke="#fff" strokeWidth="1.100" /></TrayIcon>
          <TrayIcon $ml={6} width="18" height="15" viewBox="0 0 18 15">
            <path d="M1 5h2l3.500-3.500v11L3 9H1z" fill="none" stroke="#fff" />
            <circle cx="12" cy="10" r="4.800" fill="#e0242c" /><path d="M10 8l4 4M14 8l-4 4" stroke="#fff" strokeWidth="1.200" />
          </TrayIcon>
          <Lang>HUN</Lang>
          <Clock>13:59<br />27/02/2020</Clock>
          <TrayIcon $ml={6} $mr={11} width="26" height="26" viewBox="0 0 26 26">
            <path d="M1 3h16v12H9l-4 4v-4H1z" fill="#fff" />
            <path d="M3.500 6.500h11M3.500 9h11M3.500 11.500h11" stroke="#020407" />
            <circle cx="16" cy="18" r="7.800" fill="#2c2d30" stroke="#8b8b8b" />
            <text x="16" y="22" fontSize="11" fontWeight="600" fill="#fff" textAnchor="middle" fontFamily="Open Sans">1</text>
          </TrayIcon>
          <ShowDesktop />
        </Tray>
      </Taskbar>
    </Screen>
  );
}
